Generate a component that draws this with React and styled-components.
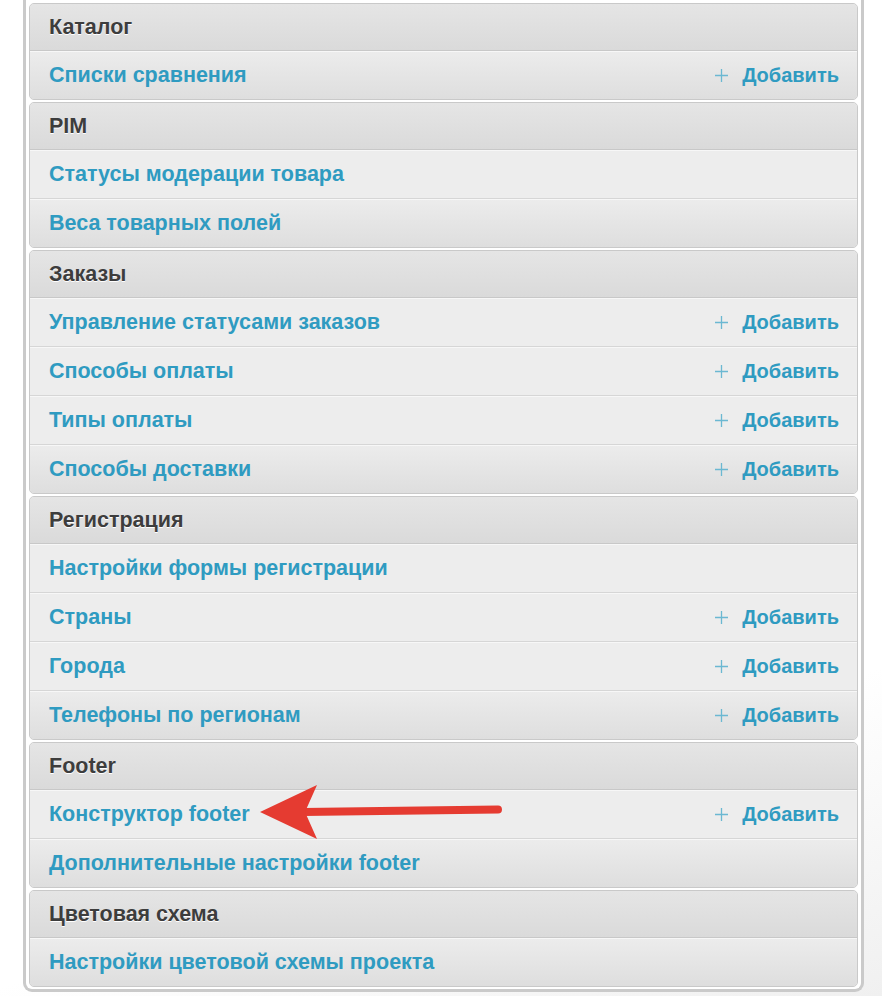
import React from 'react';
import styled, { createGlobalStyle } from 'styled-components';

const GlobalStyle = createGlobalStyle`
  html, body {
    margin: 0;
    padding: 0;
    background: #fff;
  }
  body {
    font-family: "Liberation Sans", Arial, sans-serif;
  }
  * {
    box-sizing: border-box;
  }
`;

const Page = styled.div`
  position: relative;
  width: 882px;
  height: 996px;
  overflow: hidden;
  background: linear-gradient(160deg, #fff 75%, #f0f0f0 100%);
`;

const Frame = styled.div`
  margin-left: 23px;
  width: 841px;
  border: 3px solid #cacaca;
  border-top: 0;
  border-radius: 0 0 9px 9px;
  padding: 3px 3px 2px 3px;
  display: flex;
  flex-direction: column;
  gap: 2px;
  background: #fff;
`;

const Module = styled.div`
  border: 1px solid #c9c9c9;
  border-radius: 5px;
  overflow: hidden;
  background: #ededed;
`;

const Header = styled.div`
  height: 47px;
  display: flex;
  align-items: center;
  padding: 0 19px;
  background: linear-gradient(#e5e5e5, #dadada);
  border-bottom: 1px solid #c8c8c8;
  color: #3d3d3d;
  font-weight: bold;
  font-size: 21.5px;
  text-shadow: 0 1px 0 #fff;
`;

const Row = styled.div`
  height: 48px;
  display: flex;
  align-items: center;
  justify-content: space-between;
  padding: 0 18px 0 19px;
  box-shadow: inset 0 1px 0 #f7f7f7;
  background: ${p => (p.$last ? 'linear-gradient(#ececec, #dedede)' : '#ededed')};
  & + & {
    height: 49px;
    border-top: 1px solid #d6d6d6;
  }
`;

const Link = styled.span`
  color: #2f9bc1;
  font-weight: bold;
  font-size: 21.5px;
`;

const AddLink = styled.span`
  display: flex;
  align-items: center;
  gap: 14px;
  color: #2f9bc1;
  font-weight: bold;
  font-size: 20px;
`;

const Plus = styled.svg`
  width: 13px;
  height: 13px;
`;

const Arrow = styled.svg`
  position: absolute;
  left: 255px;
  top: 780px;
`;

const sections = [
  { title: 'Каталог', rows: [['Списки сравнения', true]] },
  { title: 'PIM', rows: [['Статусы модерации товара'], ['Веса товарных полей']] },
  {
    title: 'Заказы',
    rows: [
      ['Управление статусами заказов', true],
      ['Способы оплаты', true],
      ['Типы оплаты', true],
      ['Способы доставки', true],
    ],
  },
  {
    title: 'Регистрация',
    rows: [
      ['Настройки формы регистрации'],
      ['Страны', true],
      ['Города', true],
      ['Телефоны по регионам', true],
    ],
  },
  {
    title: 'Footer',
    rows: [['Конструктор footer', true], ['Дополнительные настройки footer']],
  },
  { title: 'Цветовая схема', rows: [['Настройки цветовой схемы проекта']] },
];

const App = () => (
  <Page>
    <GlobalStyle />
    <Frame>
      {sections.map((s) => (
        <Module key={s.title}>
          <Header>{s.title}</Header>
          {s.rows.map(([label, add], i) => (
            <Row key={label} $last={i === s.rows.length - 1}>
              <Link>{label}</Link>
              {add && (
                <AddLink>
                  <Plus viewBox="0 0 13 13">
                    <path d="M6.5 0v13M0 6.5h13" stroke="#6bb8d2" strokeWidth="1.3" />
                  </Plus>
                  Добавить
                </AddLink>
              )}
            </Row>
          ))}
        </Module>
      ))}
    </Frame>
    <Arrow width="250" height="62" viewBox="0 0 250 62">
      <path d="M243 29.5 L48 32" stroke="#e53b31" strokeWidth="8" strokeLinecap="round" fill="none" />
      <path d="M5 32 L62 5 L50 32 L62 59 Z" fill="#e53b31" />
    </Arrow>
  </Page>
);

export default App;
